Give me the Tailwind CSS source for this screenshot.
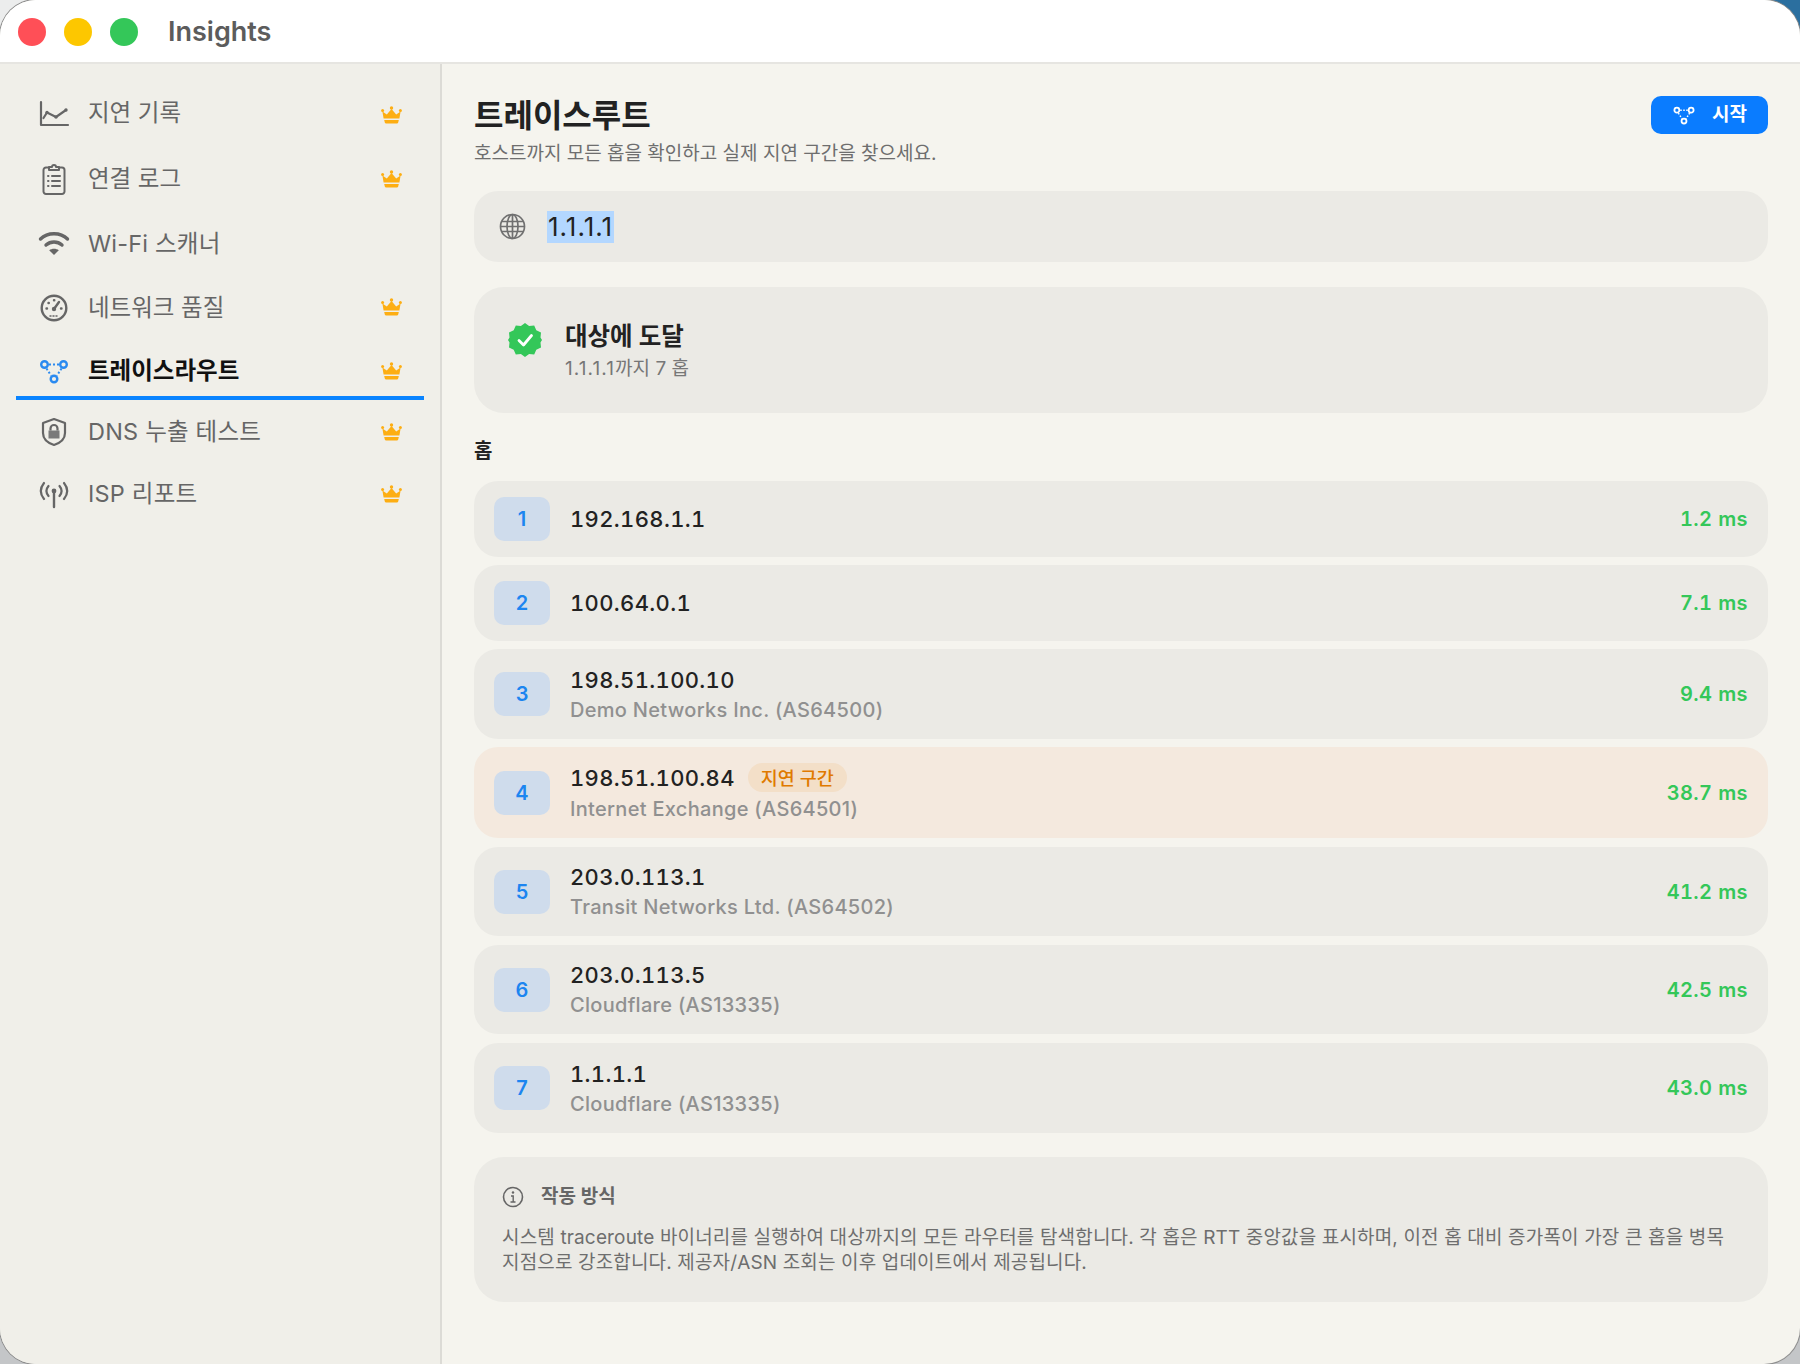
<!DOCTYPE html>
<html lang="ko">
<head>
<meta charset="utf-8">
<title>Insights</title>
<script src="https://cdn.jsdelivr.net/npm/@tailwindcss/browser@4"></script>
</head>
<body class="relative m-0 h-[1364px] w-[1800px] overflow-hidden bg-[#c4c6c8] font-['Inter','Noto_Sans_CJK_KR',sans-serif]">
<div class="absolute top-0 right-0 size-[40px] bg-[#2b6f9f]"></div>
<div class="absolute top-0 left-0 size-[40px] bg-[#eceded]"></div>
<div class="relative flex h-[1364px] w-[1800px] flex-col overflow-hidden rounded-[36px] bg-[#f5f4ee] ring-1 ring-[#8f8f8f]">
  <header class="flex h-[64px] shrink-0 items-center border-b-2 border-[#e6e5e1] bg-white pt-[1px] pl-[18px]">
    <span class="size-[28px] rounded-full bg-[#ff4f57]"></span>
    <span class="ml-[18px] size-[28px] rounded-full bg-[#fdc700]"></span>
    <span class="ml-[18px] size-[28px] rounded-full bg-[#34c759]"></span>
    <span class="mt-[2px] ml-[30px] text-[27px] font-semibold text-[#5c5c5c]">Insights</span>
  </header>
  <div class="flex min-h-0 flex-1">
    <aside class="flex w-[442px] shrink-0 flex-col border-r-[2px] border-[#dcdbd6] bg-[#f0efe9] pt-[16px] pl-[16px]">
      <div class="flex h-[66px] w-[408px] items-center pl-[22px] text-[#666666]">
        <svg class="size-[32px]" viewBox="0 0 32 32" fill="none" stroke="#666" stroke-width="2.2" stroke-linecap="round" stroke-linejoin="round"><path d="M3 5v23h27"/><path d="M5.500 21L9 15.500l9 4.500 10-7"/><circle cx="9" cy="15.500" r="1.700" fill="#666" stroke="none"/><circle cx="18" cy="20" r="1.700" fill="#666" stroke="none"/><circle cx="28" cy="13" r="1.700" fill="#666" stroke="none"/></svg>
        <span class="ml-[18px] flex-1 text-[23.5px]">지연 기록</span>
        <svg class="mt-[3px] mr-[22px] h-[18px] w-[21px]" viewBox="0 0 21 18" fill="#fdae13"><circle cx="10.5" cy="2" r="1.7"/><circle cx="1.6" cy="4.4" r="1.5"/><circle cx="19.4" cy="4.4" r="1.5"/><path d="M2.6 12.4L1.4 5.6l4.4 2.8L10.5 3l4.7 5.4 4.4-2.8-1.2 6.8z"/><path d="M3.2 14h14.6l-.6 2.6a1 1 0 0 1-1 .8H4.8a1 1 0 0 1-1-.8z"/></svg>
      </div>
      <div class="flex h-[65px] w-[408px] items-center pl-[22px] text-[#666666]">
        <svg class="size-[32px]" viewBox="0 0 32 32" fill="none" stroke="#666" stroke-width="2" stroke-linecap="round" stroke-linejoin="round"><path d="M11 4.500H8a2.500 2.500 0 0 0-2.500 2.500v21.500A2.500 2.500 0 0 0 8 31h16a2.500 2.500 0 0 0 2.500-2.500V7A2.500 2.500 0 0 0 24 4.500h-3"/><path d="M11 7V4h3a2 2 0 0 1 4 0h3v3z"/><path d="M10 13h.5M14 13h8M10 18h.5M14 18h8M10 23h.5M14 23h8"/></svg>
        <span class="ml-[18px] flex-1 text-[23.5px]">연결 로그</span>
        <svg class="mr-[22px] h-[18px] w-[21px]" viewBox="0 0 21 18" fill="#fdae13"><circle cx="10.5" cy="2" r="1.7"/><circle cx="1.6" cy="4.4" r="1.5"/><circle cx="19.4" cy="4.4" r="1.5"/><path d="M2.6 12.4L1.4 5.6l4.4 2.8L10.5 3l4.7 5.4 4.4-2.8-1.2 6.8z"/><path d="M3.2 14h14.6l-.6 2.6a1 1 0 0 1-1 .8H4.8a1 1 0 0 1-1-.8z"/></svg>
      </div>
      <div class="flex h-[66px] w-[408px] items-center pl-[22px] text-[#666666]">
        <svg class="size-[32px]" viewBox="0 0 32 32" fill="none" stroke="#666" stroke-width="3.4" stroke-linecap="round"><path d="M2.500 11C9.500 4 22.500 4 29.500 11"/><path d="M8 17c4.500-4 11.500-4 16 0"/><path d="M16 27l-4.800-4.800c2.600-2 7-2 9.600 0z" fill="#666" stroke="none"/></svg>
        <span class="ml-[18px] flex-1 text-[23.5px] tracking-[0.2px]">Wi-Fi 스캐너</span>
      </div>
      <div class="flex h-[61px] w-[408px] items-center pl-[22px] text-[#666666]">
        <svg class="size-[32px]" viewBox="0 0 32 32" fill="none" stroke="#666" stroke-width="2.4" stroke-linecap="round"><circle cx="16" cy="16" r="12.300"/><path d="M16 17l5-7"/><circle cx="16" cy="17" r="2.200" fill="#666" stroke="none"/><path d="M8.500 16.500h.5M10.500 11h.3M16 8.300h.3M23 16.500h.5"/><path d="M12 24h8" stroke-width="1.500" stroke-dasharray="1 2"/></svg>
        <span class="ml-[18px] flex-1 text-[23.5px]">네트워크 품질</span>
        <svg class="mb-[2px] mr-[22px] h-[18px] w-[21px]" viewBox="0 0 21 18" fill="#fdae13"><circle cx="10.5" cy="2" r="1.7"/><circle cx="1.6" cy="4.4" r="1.5"/><circle cx="19.4" cy="4.4" r="1.5"/><path d="M2.6 12.4L1.4 5.6l4.4 2.8L10.5 3l4.7 5.4 4.4-2.8-1.2 6.8z"/><path d="M3.2 14h14.6l-.6 2.6a1 1 0 0 1-1 .8H4.8a1 1 0 0 1-1-.8z"/></svg>
      </div>
      <div class="flex h-[62px] w-[408px] items-center border-b-[4px] border-[#0a84ff] pt-[7px] pl-[22px] text-[#111111]">
        <svg class="size-[32px]" viewBox="0 0 32 32" fill="none" stroke="#2a8af0" stroke-width="2.400"><circle cx="6.500" cy="9.500" r="3.300"/><circle cx="25.500" cy="9.500" r="3.300"/><circle cx="16" cy="24" r="3.300"/><path d="M11 9.500h10M8.500 13.500l4.500 7M23.500 13.500l-4.500 7" stroke-width="2" stroke-dasharray="2 2"/></svg>
        <span class="ml-[18px] flex-1 text-[23.5px] font-bold">트레이스라우트</span>
        <svg class="mr-[22px] h-[18px] w-[21px]" viewBox="0 0 21 18" fill="#fdae13"><circle cx="10.5" cy="2" r="1.7"/><circle cx="1.6" cy="4.4" r="1.5"/><circle cx="19.4" cy="4.4" r="1.5"/><path d="M2.6 12.4L1.4 5.6l4.4 2.8L10.5 3l4.7 5.4 4.4-2.8-1.2 6.8z"/><path d="M3.2 14h14.6l-.6 2.6a1 1 0 0 1-1 .8H4.8a1 1 0 0 1-1-.8z"/></svg>
      </div>
      <div class="flex h-[63px] w-[408px] items-center pl-[22px] text-[#666666]">
        <svg class="size-[32px]" viewBox="0 0 32 32" fill="none" stroke="#666" stroke-width="2.200" stroke-linejoin="round"><path d="M16 3l11 4v10c0 6-5 10-11 12C10 27 5 23 5 17V7z"/><path d="M10.500 14.500h11v8h-11z" fill="#7a7a7a" stroke="none"/><path d="M12.500 14.500v-2a3.500 3.500 0 0 1 7 0v2"/></svg>
        <span class="ml-[18px] flex-1 text-[23.5px] tracking-[0.2px]">DNS 누출 테스트</span>
        <svg class="mr-[22px] h-[18px] w-[21px]" viewBox="0 0 21 18" fill="#fdae13"><circle cx="10.5" cy="2" r="1.7"/><circle cx="1.6" cy="4.4" r="1.5"/><circle cx="19.4" cy="4.4" r="1.5"/><path d="M2.6 12.4L1.4 5.6l4.4 2.8L10.5 3l4.7 5.4 4.4-2.8-1.2 6.8z"/><path d="M3.2 14h14.6l-.6 2.6a1 1 0 0 1-1 .8H4.8a1 1 0 0 1-1-.8z"/></svg>
      </div>
      <div class="flex h-[61px] w-[408px] items-center pl-[22px] text-[#666666]">
        <svg class="size-[32px]" viewBox="0 0 32 32" fill="none" stroke="#666" stroke-width="2.200" stroke-linecap="round"><path d="M16 14v15" stroke-width="2.400"/><circle cx="16" cy="13" r="2.400" fill="#666" stroke="none"/><path d="M10.500 8c-2.500 3-2.500 7 0 10M21.500 8c2.500 3 2.500 7 0 10M6 5c-4 5-4 11 0 16M26 5c4 5 4 11 0 16"/></svg>
        <span class="ml-[18px] flex-1 text-[23.5px] tracking-[0.2px]">ISP 리포트</span>
        <svg class="mr-[22px] h-[18px] w-[21px]" viewBox="0 0 21 18" fill="#fdae13"><circle cx="10.5" cy="2" r="1.7"/><circle cx="1.6" cy="4.4" r="1.5"/><circle cx="19.4" cy="4.4" r="1.5"/><path d="M2.6 12.4L1.4 5.6l4.4 2.8L10.5 3l4.7 5.4 4.4-2.8-1.2 6.8z"/><path d="M3.2 14h14.6l-.6 2.6a1 1 0 0 1-1 .8H4.8a1 1 0 0 1-1-.8z"/></svg>
      </div>
    </aside>
    <main class="flex-1 pt-[32px] pr-[32px] pl-[32px]">
      <div class="flex items-start justify-between">
        <div>
          <h1 class="text-[32px] leading-[40px] font-bold text-[#222222]">트레이스루트</h1>
          <p class="mt-[6px] text-[19px] leading-[24px] text-[#6e6e6e]">호스트까지 모든 홉을 확인하고 실제 지연 구간을 찾으세요.</p>
        </div>
        <button class="flex h-[38px] w-[117px] items-center rounded-[10px] bg-[#0a7cff] pl-[21px] text-white">
          <svg class="size-[24px]" viewBox="0 0 32 32" fill="none" stroke="#fff" stroke-width="2.400"><circle cx="6.500" cy="9.500" r="3.300"/><circle cx="25.500" cy="9.500" r="3.300"/><circle cx="16" cy="24" r="3.300"/><path d="M11 9.500h10M8.500 13.500l4.500 7M23.500 13.500l-4.500 7" stroke-width="2" stroke-dasharray="2 2"/></svg>
          <span class="ml-[16px] text-[19px] font-semibold">시작</span>
        </button>
      </div>
      <div class="mt-[25px] flex h-[71px] items-center rounded-[24px] bg-[#ebeae5] pl-[25px]">
        <svg class="size-[27px]" viewBox="0 0 27 27" fill="none" stroke="#707070" stroke-width="1.700"><circle cx="13.500" cy="13.500" r="12"/><ellipse cx="13.500" cy="13.500" rx="5.500" ry="12"/><path d="M13.500 1.500v24M2.500 8.500h22M2.500 18.500h22M1.500 13.500h24"/></svg>
        <span class="ml-[21px] bg-[#b3d7ff] px-[1px] text-[26px] leading-[32px] tracking-[1px] text-[#222222]">1.1.1.1</span>
      </div>
      <div class="mt-[25px] flex h-[126px] items-center rounded-[30px] bg-[#ebeae5] pl-[34px]">
        <svg class="mb-[20px] size-[34px]" viewBox="0 0 34 34"><path fill="#34c759" d="M17 0l4.100 3.100 5.100-.5 2.100 4.700 4.700 2.100-.5 5.100L34 17l-1.500 2.500.5 5.100-4.700 2.100-2.100 4.700-5.100-.5L17 34l-4.100-3.100-5.100.5-2.100-4.700L1 24.600l.5-5.100L0 17l1.500-2.500L1 9.400l4.700-2.100 2.100-4.700 5.100.5z"/><path d="M11 17.500l4.500 4.500 8-9.500" fill="none" stroke="#fff" stroke-width="2.800" stroke-linecap="round" stroke-linejoin="round"/></svg>
        <div class="ml-[23px]">
          <div class="text-[24.500px] leading-[32px] font-semibold text-[#222222]">대상에 도달</div>
          <div class="mt-[5px] text-[19px] leading-[24px] text-[#777777]"><span class="tracking-[1.100px]">1.1.1.1</span>까지 7 홉</div>
        </div>
      </div>
      <h2 class="mt-[26px] text-[20px] leading-[24px] font-semibold text-[#222222]">홉</h2>
      <div class="mt-[18px] flex flex-col gap-[8px]">
        <div class="flex h-[76px] items-center rounded-[24px] bg-[#ebeae5] pr-[20px] pl-[20px]">
          <span class="flex h-[44px] w-[56px] items-center justify-center rounded-[10px] bg-[#cfdcec] text-[20px] font-semibold text-[#1c85f0]">1</span>
          <div class="ml-[20px] flex-1"><div class="text-[22px] leading-[28px] font-medium tracking-[0.35px] text-[#222222] tabular-nums">192.168.1.1</div></div>
          <span class="text-[20px] font-semibold tracking-[0.4px] text-[#34c759] tabular-nums">1.2 ms</span>
        </div>
        <div class="flex h-[76px] items-center rounded-[24px] bg-[#ebeae5] pr-[20px] pl-[20px]">
          <span class="flex h-[44px] w-[56px] items-center justify-center rounded-[10px] bg-[#cfdcec] text-[20px] font-semibold text-[#1c85f0]">2</span>
          <div class="ml-[20px] flex-1"><div class="text-[22px] leading-[28px] font-medium tracking-[0.35px] text-[#222222] tabular-nums">100.64.0.1</div></div>
          <span class="text-[20px] font-semibold tracking-[0.4px] text-[#34c759] tabular-nums">7.1 ms</span>
        </div>
        <div class="flex h-[90px] items-center rounded-[24px] bg-[#ebeae5] pr-[20px] pl-[20px]">
          <span class="flex h-[44px] w-[56px] items-center justify-center rounded-[10px] bg-[#cfdcec] text-[20px] font-semibold text-[#1c85f0]">3</span>
          <div class="ml-[20px] flex-1"><div class="text-[22px] leading-[28px] font-medium tracking-[0.35px] text-[#222222] tabular-nums">198.51.100.10</div><div class="mt-[3px] text-[20px] leading-[26px] font-medium tracking-[0.3px] text-[#909090]">Demo Networks Inc. (AS64500)</div></div>
          <span class="text-[20px] font-semibold tracking-[0.4px] text-[#34c759] tabular-nums">9.4 ms</span>
        </div>
        <div class="flex h-[91px] items-center rounded-[24px] bg-[#f4e9de] pr-[20px] pl-[20px]">
          <span class="flex h-[44px] w-[56px] items-center justify-center rounded-[10px] bg-[#cfdcec] text-[20px] font-semibold text-[#1c85f0]">4</span>
          <div class="ml-[20px] flex-1"><div class="flex items-center text-[22px] leading-[28px] font-medium tracking-[0.35px] text-[#222222] tabular-nums">198.51.100.84<span class="ml-[13px] flex h-[29px] w-[99px] items-center justify-center rounded-full bg-[#f3dfc8] text-[18.500px] font-medium tracking-normal text-[#e07a00]">지연 구간</span></div><div class="mt-[4px] text-[20px] leading-[26px] font-medium tracking-[0.3px] text-[#909090]">Internet Exchange (AS64501)</div></div>
          <span class="text-[20px] font-semibold tracking-[0.4px] text-[#34c759] tabular-nums">38.7 ms</span>
        </div>
        <div class="mt-[1px] flex h-[89px] items-center rounded-[24px] bg-[#ebeae5] pr-[20px] pl-[20px]">
          <span class="flex h-[44px] w-[56px] items-center justify-center rounded-[10px] bg-[#cfdcec] text-[20px] font-semibold text-[#1c85f0]">5</span>
          <div class="ml-[20px] flex-1"><div class="text-[22px] leading-[28px] font-medium tracking-[0.35px] text-[#222222] tabular-nums">203.0.113.1</div><div class="mt-[3px] text-[20px] leading-[26px] font-medium tracking-[0.3px] text-[#909090]">Transit Networks Ltd. (AS64502)</div></div>
          <span class="text-[20px] font-semibold tracking-[0.4px] text-[#34c759] tabular-nums">41.2 ms</span>
        </div>
        <div class="mt-[1px] flex h-[89px] items-center rounded-[24px] bg-[#ebeae5] pr-[20px] pl-[20px]">
          <span class="flex h-[44px] w-[56px] items-center justify-center rounded-[10px] bg-[#cfdcec] text-[20px] font-semibold text-[#1c85f0]">6</span>
          <div class="ml-[20px] flex-1"><div class="text-[22px] leading-[28px] font-medium tracking-[0.35px] text-[#222222] tabular-nums">203.0.113.5</div><div class="mt-[3px] text-[20px] leading-[26px] font-medium tracking-[0.3px] text-[#909090]">Cloudflare (AS13335)</div></div>
          <span class="text-[20px] font-semibold tracking-[0.4px] text-[#34c759] tabular-nums">42.5 ms</span>
        </div>
        <div class="mt-[1px] flex h-[90px] items-center rounded-[24px] bg-[#ebeae5] pr-[20px] pl-[20px]">
          <span class="flex h-[44px] w-[56px] items-center justify-center rounded-[10px] bg-[#cfdcec] text-[20px] font-semibold text-[#1c85f0]">7</span>
          <div class="ml-[20px] flex-1"><div class="text-[22px] leading-[28px] font-medium tracking-[0.35px] text-[#222222] tabular-nums">1.1.1.1</div><div class="mt-[3px] text-[20px] leading-[26px] font-medium tracking-[0.3px] text-[#909090]">Cloudflare (AS13335)</div></div>
          <span class="text-[20px] font-semibold tracking-[0.4px] text-[#34c759] tabular-nums">43.0 ms</span>
        </div>
      </div>
      <div class="mt-[24px] h-[145px] rounded-[30px] bg-[#ebeae5] pt-[26px] pl-[28px]">
        <div class="flex items-center">
          <svg class="size-[22px]" viewBox="0 0 22 22" fill="none" stroke="#666" stroke-width="1.600"><circle cx="11" cy="11" r="9.500"/><path d="M9 10h2.200v6M8.500 16h5" stroke-width="1.400"/><circle cx="11" cy="6.500" r="1.200" fill="#666" stroke="none"/></svg>
          <span class="ml-[17px] text-[19px] font-semibold text-[#666666]">작동 방식</span>
        </div>
        <p class="mt-[13px] w-[1238px] break-keep text-[19px] leading-[25px] tracking-[0.15px] text-[#6e6e6e]">시스템 traceroute 바이너리를 실행하여 대상까지의 모든 라우터를 탐색합니다. 각 홉은 RTT 중앙값을 표시하며, 이전 홉 대비 증가폭이 가장 큰 홉을 병목 지점으로 강조합니다. 제공자/ASN 조회는 이후 업데이트에서 제공됩니다.</p>
      </div>
    </main>
  </div>
</div>
</body>
</html>
